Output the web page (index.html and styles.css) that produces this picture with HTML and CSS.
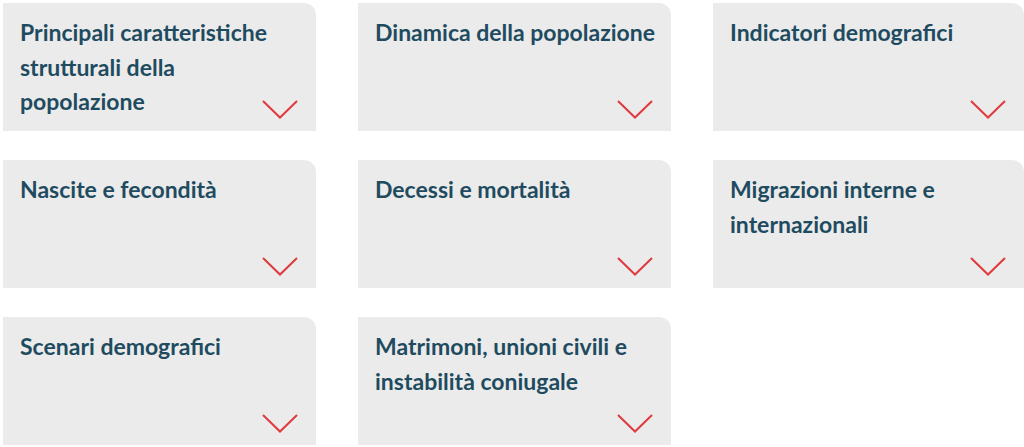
FILE: index.html
```html
<!DOCTYPE html>
<html lang="it">
<head>
<meta charset="utf-8">
<link rel="stylesheet" href="styles.css">
</head>
<body>
<div class="grid">
  <div class="card"><h3 class="title">Principali caratteristiche strutturali della popolazione</h3><svg class="chev" viewBox="0 0 36 19"><path d="M1 1 L18 17.5 L35 1"/></svg></div>
  <div class="card"><h3 class="title">Dinamica della popolazione</h3><svg class="chev" viewBox="0 0 36 19"><path d="M1 1 L18 17.5 L35 1"/></svg></div>
  <div class="card"><h3 class="title">Indicatori demografici</h3><svg class="chev" viewBox="0 0 36 19"><path d="M1 1 L18 17.5 L35 1"/></svg></div>
  <div class="card"><h3 class="title">Nascite e fecondità</h3><svg class="chev" viewBox="0 0 36 19"><path d="M1 1 L18 17.5 L35 1"/></svg></div>
  <div class="card"><h3 class="title">Decessi e mortalità</h3><svg class="chev" viewBox="0 0 36 19"><path d="M1 1 L18 17.5 L35 1"/></svg></div>
  <div class="card"><h3 class="title">Migrazioni interne e internazionali</h3><svg class="chev" viewBox="0 0 36 19"><path d="M1 1 L18 17.5 L35 1"/></svg></div>
  <div class="card"><h3 class="title">Scenari demografici</h3><svg class="chev" viewBox="0 0 36 19"><path d="M1 1 L18 17.5 L35 1"/></svg></div>
  <div class="card"><h3 class="title">Matrimoni, unioni civili e instabilità coniugale</h3><svg class="chev" viewBox="0 0 36 19"><path d="M1 1 L18 17.5 L35 1"/></svg></div>
</div>
</body>
</html>
```
FILE: styles.css
```css
html, body {
  margin: 0;
  padding: 0;
  background: #ffffff;
  overflow: hidden;
}
body {
  padding: 3px 0 0 3px;
  font-family: Lato, "Noto Sans", sans-serif;
}
.grid {
  display: grid;
  grid-template-columns: 313px 313px 311px;
  grid-auto-rows: 128px;
  column-gap: 42px;
  row-gap: 29px;
}
.card {
  position: relative;
  background: #ebebeb;
  border-top-right-radius: 12px;
  padding: 12px 14px 0 17px;
  box-sizing: border-box;
}
.title {
  margin: 0;
  font-size: 23px;
  line-height: 34.5px;
  font-weight: 700;
  color: #1f4b60;
}
.chev {
  position: absolute;
  right: 18px;
  bottom: 12px;
  width: 36px;
  height: 19px;
  fill: none;
  stroke: #e0393e;
  stroke-width: 2;
}
```
